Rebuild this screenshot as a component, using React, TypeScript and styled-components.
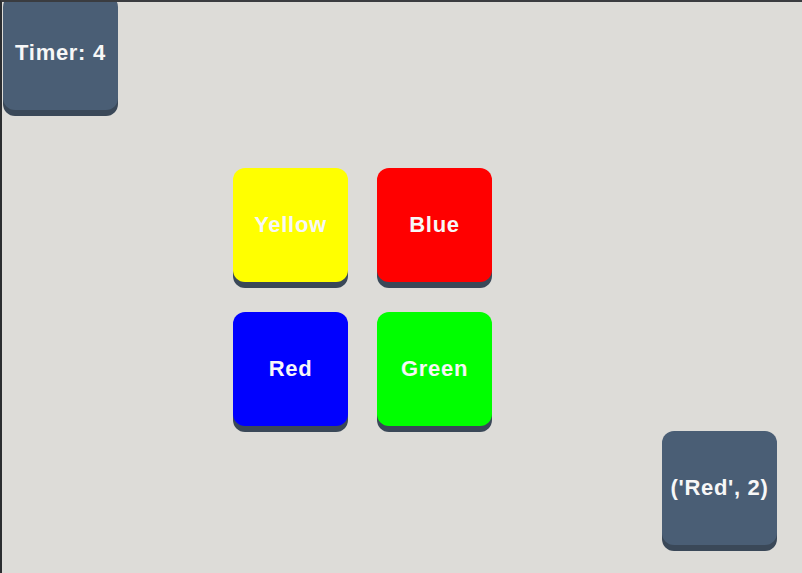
import styled, { createGlobalStyle } from 'styled-components';

const GlobalStyle = createGlobalStyle`
  html, body {
    margin: 0;
    padding: 0;
    background: #dddcd8;
  }
  body {
    font-family: "Liberation Sans", Arial, sans-serif;
  }
`;

const TILES = [
  { label: 'Yellow', color: '#ffff00' },
  { label: 'Blue', color: '#ff0000' },
  { label: 'Red', color: '#0000ff' },
  { label: 'Green', color: '#00ff00' },
];

const App = () => {
  return (
    <>
      <GlobalStyle />
      <Screen>
        <TimerBox>Timer: 4</TimerBox>
        <Board>
          {TILES.map((tile) => (
            <Tile key={tile.label} $color={tile.color}>
              {tile.label}
            </Tile>
          ))}
        </Board>
        <AnswerBox>('Red', 2)</AnswerBox>
      </Screen>
    </>
  );
};

export default App;

const Screen = styled.div`
  display: flex;
  flex-direction: column;
  box-sizing: border-box;
  width: 802px;
  height: 573px;
  overflow: hidden;
  background: #dddcd8;
  border-left: 2px solid #2b2d30;
  border-top: 2px solid #3a3c40;
`;

const Block = styled.div`
  display: flex;
  align-items: center;
  justify-content: center;
  width: 115px;
  height: 115px;
  border-radius: 12px;
  color: #f7f7f7;
  font-size: 22px;
  font-weight: 700;
  letter-spacing: 0.7px;
  box-shadow: 0 6px 0 #3a4858;
  white-space: nowrap;
`;

const TimerBox = styled(Block)`
  flex: none;
  margin: -7px 0 0 1px;
  background: #4a5e75;
`;

const Board = styled.div`
  display: grid;
  grid-template-columns: 115px 115px;
  column-gap: 29px;
  row-gap: 30px;
  margin: 58px 0 0 231px;
`;

const Tile = styled(Block)<{ $color: string }>`
  height: 114px;
  background: ${({ $color }) => $color};
`;

const AnswerBox = styled(Block)`
  align-self: flex-end;
  height: 114px;
  margin: 5px 25px 0 0;
  background: #4a5e75;
`;
